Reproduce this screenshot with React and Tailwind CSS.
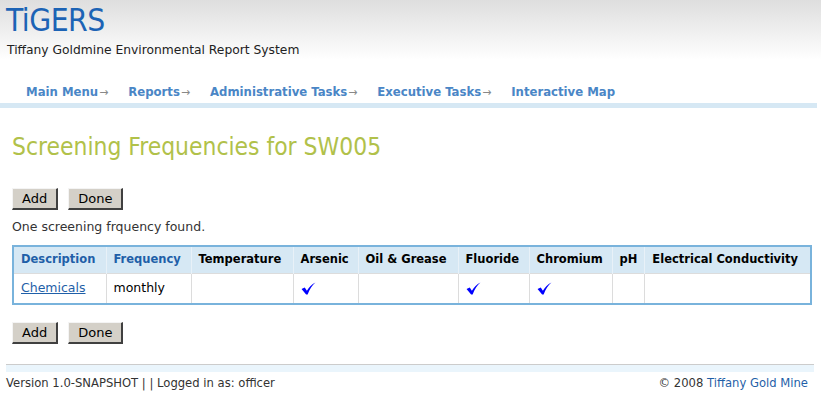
import React from "react";

const Check = () => (
  <svg width="15" height="13" viewBox="0 0 14 12" className="inline-block">
    <path d="M0.5 6.5 L3.5 5 L5.5 8 C7.5 4.5 10 2 13.5 0.3 C10.5 3 8 6.5 6.2 11.7 L4.8 11.7 Z" fill="#0000ff" />
  </svg>
);

const Arrow = () => (
  <span className="text-[#888] font-normal text-[12px] ml-[1px]">→</span>
);

export default function App() {
  const cols = [
    { t: "Description", w: "w-[93px]", blue: true },
    { t: "Frequency", w: "w-[85px]", blue: true },
    { t: "Temperature", w: "w-[102px]" },
    { t: "Arsenic", w: "w-[65px]" },
    { t: "Oil & Grease", w: "w-[100px]" },
    { t: "Fluoride", w: "w-[71px]" },
    { t: "Chromium", w: "w-[83px]" },
    { t: "pH", w: "w-[32px]" },
    { t: "Electrical Conductivity", w: "" },
  ];
  const row = [
    <a className="text-[#1f5fa8] underline">Chemicals</a>,
    "monthly",
    "",
    <Check />,
    "",
    <Check />,
    <Check />,
    "",
    "",
  ];
  const btn =
    "bg-[#d4d0c8] text-black text-[13px] h-[22px] px-[9px] border-t border-l border-t-[#f4f4f4] border-l-[#f4f4f4] border-r-2 border-b-2 border-r-[#404040] border-b-[#404040] leading-none";
  return (
    <div className="w-[821px] h-[402px] bg-white font-['DejaVu_Sans',Verdana,sans-serif] text-[#333] overflow-hidden">
      <div className="bg-gradient-to-b from-[#dedede] to-white h-[60px] px-[6px] pt-[2px]">
        <div className="text-[#1c63b5] text-[31.5px] leading-[36px] tracking-[-0.5px] font-['DejaVu_Sans_Condensed',sans-serif]">TiGERS</div>
        <div className="text-[12.3px] text-[#222] mt-[5px] leading-[14px] pl-[1px]">Tiffany Goldmine Environmental Report System</div>
      </div>
      <div className="flex gap-[20px] pl-[26px] pt-[24px] h-[43px] text-[13px] font-bold text-[#4a86c6] font-['DejaVu_Sans_Condensed',sans-serif] leading-[15px]">
        <span>Main Menu<Arrow /></span>
        <span>Reports<Arrow /></span>
        <span>Administrative Tasks<Arrow /></span>
        <span>Executive Tasks<Arrow /></span>
        <span>Interactive Map</span>
      </div>
      <div className="h-[5px] bg-[#d6e8f4] w-[817px]" />
      <div className="px-[12px]">
        <h1 className="text-[#b1c14a] text-[24.4px] leading-[30px] mt-[24px] font-['DejaVu_Sans_Condensed',sans-serif]">Screening Frequencies for SW005</h1>
        <div className="flex gap-[10px] mt-[26px]">
          <button className={btn}>Add</button>
          <button className={btn}>Done</button>
        </div>
        <div className="text-[12.5px] mt-[10px] leading-[14px]">One screening frquency found.</div>
        <table className="mt-[11px] w-[800px] border-2 border-[#79b3dc] border-collapse text-[11.5px]">
          <thead>
            <tr className="bg-[#d6e8f4] h-[27px]">
              {cols.map((c, i) => (
                <th
                  key={i}
                  className={`${c.w} text-left font-bold px-[7px] border-l border-[#e8f1f8] ${c.blue ? "text-[#1f5fa8]" : "text-black"}`}
                >
                  {c.t}
                </th>
              ))}
            </tr>
          </thead>
          <tbody>
            <tr className="h-[31px] text-[12.5px]">
              {row.map((c, i) => (
                <td key={i} className="px-[7px] border-l border-t border-[#dcdcdc] text-black align-middle">
                  {c}
                </td>
              ))}
            </tr>
          </tbody>
        </table>
        <div className="flex gap-[10px] mt-[17px]">
          <button className={btn}>Add</button>
          <button className={btn}>Done</button>
        </div>
      </div>
      <div className="mx-[6px] mt-[20px] w-[808px] border-t border-[#cccccc] h-[8px] bg-[#eaf5fc]" />
      <div className="flex justify-between px-[6px] mt-[4px] leading-[14px] w-[814px] items-baseline text-[11.6px]">
        <span>Version 1.0-SNAPSHOT | | Logged in as: officer</span>
        <span>© 2008 <span className="text-[#1f5fa8]">Tiffany Gold Mine</span></span>
      </div>
    </div>
  );
}
